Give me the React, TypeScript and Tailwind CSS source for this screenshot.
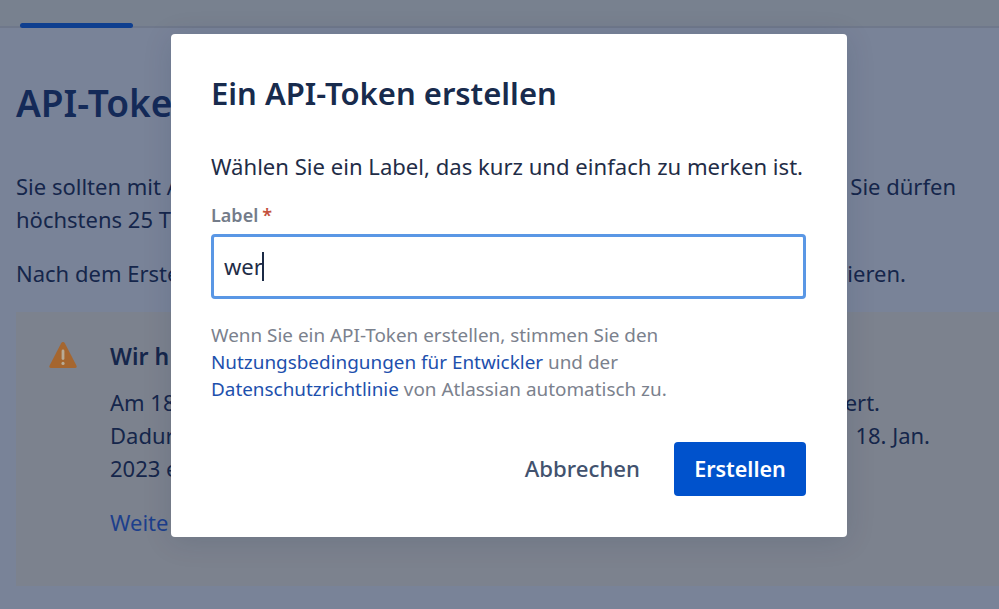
const font = { fontFamily: '"Noto Sans", "Open Sans", sans-serif' }

function Line({ width, left, right, className }: { width: string; left: string; right?: string; className?: string }) {
  return (
    <div className={`flex justify-between whitespace-nowrap ${width} ${className ?? ''}`}>
      <span>{left}</span>
      {right && <span>{right}</span>}
    </div>
  )
}

function WarningIcon() {
  return (
    <svg viewBox="0 0 28 28" className="mt-[1px] h-[28px] w-[28px] shrink-0">
      <path d="M14 1 Q15.2 1 16 2.4 L27.4 24.4 Q28.4 27 25.8 27 L2.2 27 Q-0.4 27 0.6 24.4 L12 2.4 Q12.8 1 14 1 Z" fill="#a5662f" />
      <rect x="12.6" y="8.5" width="2.8" height="10.5" rx="1.4" fill="#b8ab94" />
      <circle cx="14" cy="22.4" r="1.6" fill="#b8ab94" />
    </svg>
  )
}

export default function App() {
  return (
    <div style={font} className="relative h-[609px] w-[999px] overflow-hidden bg-[#798398] text-[#15264b]">
      <div className="flex h-[28px] items-end border-b-2 border-b-[#6f788b] bg-[#78818f] pl-[20px]">
        <div className="relative top-[2px] h-[5px] w-[113px] rounded-sm bg-[#0f3f8f]" />
      </div>

      <div className="pl-[16px] pt-[49px]">
        <h1 className="text-[37px] leading-[52px] font-semibold text-[#142a58]">API-Toke</h1>
        <div className="mt-[41px] text-[22px] leading-[33px]">
          <Line width="w-[940px]" left="Sie sollten mit A" right="Sie dürfen" />
          <Line width="w-[940px]" left="höchstens 25 T" />
          <Line width="w-[890px]" left="Nach dem Erste" right="ieren." className="mt-[21px]" />
        </div>

        <div className="mt-[22px] flex h-[274px] gap-[33px] bg-[#7c828e] pl-[33px] pt-[28px]">
          <WarningIcon />
          <div className="text-[22px] leading-[33px]">
            <div className="text-[23px] font-semibold">Wir h</div>
            <Line width="w-[770px]" left="Am 18" right="ert." className="mt-[13px]" />
            <Line width="w-[820px]" left="Dadur" right="18. Jan." />
            <Line width="w-[770px]" left="2023 e" />
            <div className="mt-[21px] text-[#1c3f8c]">Weite</div>
          </div>
        </div>
      </div>

      <div className="absolute left-[171px] top-[34px] flex h-[503px] w-[676px] flex-col rounded-[4px] bg-white px-[40px] text-[#1f2d47] shadow-[0_4px_30px_rgba(9,30,66,0.12)]">
        <h2 className="mt-[37px] text-[31px] leading-[44px] font-semibold text-[#182b4d]">Ein API-Token erstellen</h2>
        <p className="mt-[35px] whitespace-nowrap text-[22.1px] leading-[33px]">Wählen Sie ein Label, das kurz und einfach zu merken ist.</p>
        <label className="mt-[19px] text-[18px] leading-[26px] font-semibold text-[#747c8a]">
          Label<span className="ml-[4px] text-[#c4513d]">*</span>
        </label>
        <div className="mt-[6px] flex h-[65px] w-[595px] items-center rounded-[4px] border-[3px] border-[#5a97e5] pl-[10px] text-[22.1px]">
          wer
          <span className="ml-[-1px] h-[29px] w-[2px] bg-[#1b2a45]" />
        </div>
        <p className="mt-[23px] text-[18.9px] leading-[27px] text-[#7b818d]">
          Wenn Sie ein API-Token erstellen, stimmen Sie den
          <br />
          <a className="text-[#1d50ad]">Nutzungsbedingungen für Entwickler</a> und der
          <br />
          <a className="text-[#1d50ad]">Datenschutzrichtlinie</a> von Atlassian automatisch zu.
        </p>
        <div className="mt-[39px] flex w-[595px] items-center justify-end gap-[34px]">
          <button className="text-[22.2px] font-medium text-[#42526e]">Abbrechen</button>
          <button className="h-[54px] w-[132px] rounded-[4px] bg-[#0052cc] text-[21.5px] font-semibold text-white">Erstellen</button>
        </div>
      </div>
    </div>
  )
}
